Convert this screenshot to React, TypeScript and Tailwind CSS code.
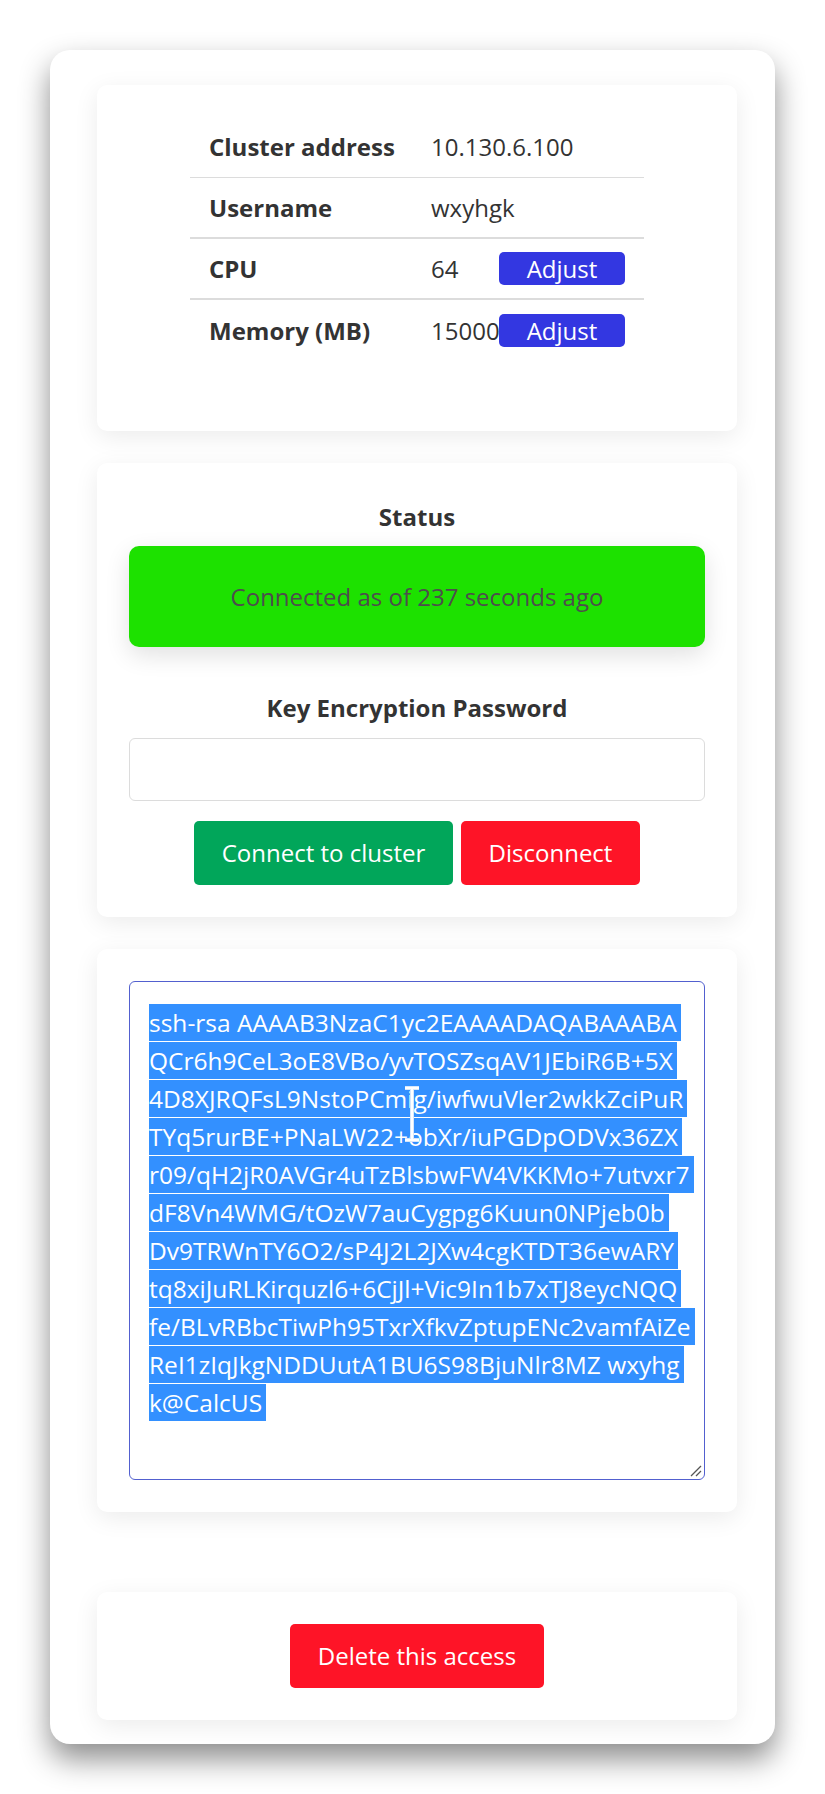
import React from "react";

const sshLines = [
  "ssh-rsa AAAAB3NzaC1yc2EAAAADAQABAAABA",
  "QCr6h9CeL3oE8VBo/yvTOSZsqAV1JEbiR6B+5X",
  "4D8XJRQFsL9NstoPCmig/iwfwuVler2wkkZciPuR",
  "TYq5rurBE+PNaLW22+obXr/iuPGDpODVx36ZX",
  "r09/qH2jR0AVGr4uTzBlsbwFW4VKKMo+7utvxr7",
  "dF8Vn4WMG/tOzW7auCygpg6Kuun0NPjeb0b",
  "Dv9TRWnTY6O2/sP4J2L2JXw4cgKTDT36ewARY",
  "tq8xiJuRLKirquzl6+6CjJl+Vic9In1b7xTJ8eycNQQ",
  "fe/BLvRBbcTiwPh95TxrXfkvZptupENc2vamfAiZe",
  "ReI1zIqJkgNDDUutA1BU6S98BjuNlr8MZ wxyhg",
  "k@CalcUS",
];

function Row({
  label,
  value,
  adjust,
  border,
}: {
  label: string;
  value: string;
  adjust?: boolean;
  border?: string;
}) {
  return (
    <div className={`flex h-[61px] items-center ${border ?? ""}`}>
      <div className="w-[241px] pl-[19px] text-[24px] font-bold text-[#333]">{label}</div>
      <div className="w-[68px] whitespace-nowrap text-[24px] text-[#333]">{value}</div>
      {adjust && (
        <button className="flex h-[33px] w-[126px] items-center justify-center rounded-[5px] bg-[#3337e1] text-[24px] leading-none text-white">
          Adjust
        </button>
      )}
    </div>
  );
}

export default function App() {
  return (
    <div className="min-h-screen bg-white px-[50px] pt-[50px] pb-[51px] font-['Open_Sans',sans-serif] text-[#333]">
      <div className="flex flex-col rounded-[20px] bg-white pt-[35px] pb-[24px] pl-[47px] pr-[38px] shadow-[0_15px_30px_rgba(0,0,0,0.45)]">
        {/* Card 1 */}
        <div className="rounded-[10px] bg-white pt-[32px] pb-[70px] shadow-[0_6px_24px_rgba(0,0,0,0.08)]">
          <div className="mx-auto w-[454px]">
            <Row label="Cluster address" value="10.130.6.100" border="border-b border-[#dcdcdc]" />
            <Row label="Username" value="wxyhgk" border="border-b-2 border-[#dcdcdc]" />
            <Row label="CPU" value="64" adjust border="border-b-2 border-[#dcdcdc]" />
            <Row label="Memory (MB)" value="15000" adjust />
          </div>
        </div>

        {/* Card 2 */}
        <div className="mt-[32px] flex flex-col rounded-[10px] bg-white p-8 shadow-[0_6px_24px_rgba(0,0,0,0.08)]">
          <div className="flex h-[44px] items-center justify-center text-[24px] font-bold text-[#333]">Status</div>
          <div className="mt-[7px] flex h-[101px] items-center justify-center rounded-[10px] bg-[#1de100] text-[24px] text-[#4d4d4d] shadow-[0_8px_24px_rgba(0,0,0,0.12)]">
            Connected as of 237 seconds ago
          </div>
          <div className="mt-[39px] flex h-[44px] items-center justify-center text-[24px] font-bold text-[#333]">
            Key Encryption Password
          </div>
          <input
            type="password"
            className="mt-[8px] h-[63px] w-full rounded-[6px] border border-[#dcdcdc] bg-white px-4 outline-none"
          />
          <div className="mt-[20px] flex justify-center gap-[8px]">
            <button className="h-[64px] w-[259px] rounded-[5px] bg-[#01a65a] text-[24px] text-white">Connect to cluster</button>
            <button className="h-[64px] w-[179px] rounded-[5px] bg-[#fe1427] text-[24px] text-white">Disconnect</button>
          </div>
        </div>

        {/* Card 3 */}
        <div className="mt-[32px] rounded-[10px] bg-white p-8 shadow-[0_6px_24px_rgba(0,0,0,0.08)]">
          <div className="relative h-[499px] rounded-[6px] border border-[#5260cf] bg-white pt-[22px] pl-[19px]">
            {sshLines.map((l, i) => (
              <div key={i} className="mb-px h-[37px] whitespace-pre">
                <span className="inline-block h-[37px] bg-[#3390ff] pr-[4px] text-[24.5px] leading-[37px] text-white">{l}</span>
              </div>
            ))}
            {/* I-beam cursor */}
            <svg className="absolute left-[272px] top-[104px]" width="20" height="56" viewBox="0 0 20 56">
              <path d="M3 2 H17 M10 2 V54 M3 54 H17" stroke="#d6e6fb" strokeWidth="4" fill="none" />
              <path d="M3 2 H17 M10 2 V54 M3 54 H17" stroke="#ffffff" strokeWidth="2" fill="none" />
            </svg>
            {/* resize handle */}
            <svg className="absolute right-[2px] bottom-[2px]" width="14" height="14" viewBox="0 0 14 14">
              <path d="M13 3 L3 13 M13 8 L8 13" stroke="#555" strokeWidth="1.3" fill="none" />
            </svg>
          </div>
        </div>

        {/* Card 4 */}
        <div className="mt-[80px] flex justify-center rounded-[10px] bg-white p-8 shadow-[0_6px_24px_rgba(0,0,0,0.08)]">
          <button className="h-[64px] w-[254px] rounded-[5px] bg-[#fe1427] text-[24px] text-white">Delete this access</button>
        </div>
      </div>
    </div>
  );
}
